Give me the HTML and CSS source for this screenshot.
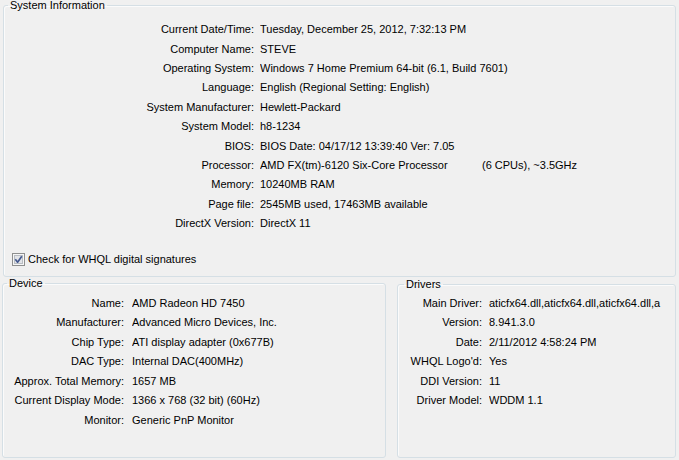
FILE: index.html
```html
<!DOCTYPE html>
<html>
<head>
<meta charset="utf-8">
<link rel="stylesheet" href="styles.css">
</head>
<body>
<div class="dlg">
  <fieldset class="group sys">
    <legend>System Information</legend>
    <dl class="rows sys-rows">
      <dt>Current Date/Time:</dt><dd>Tuesday, December 25, 2012, 7:32:13 PM</dd>
      <dt>Computer Name:</dt><dd>STEVE</dd>
      <dt>Operating System:</dt><dd>Windows 7 Home Premium 64-bit (6.1, Build 7601)</dd>
      <dt>Language:</dt><dd>English (Regional Setting: English)</dd>
      <dt>System Manufacturer:</dt><dd>Hewlett-Packard</dd>
      <dt>System Model:</dt><dd>h8-1234</dd>
      <dt>BIOS:</dt><dd>BIOS Date: 04/17/12 13:39:40 Ver: 7.05</dd>
      <dt>Processor:</dt><dd><span class="cpu">AMD FX(tm)-6120 Six-Core Processor</span>(6 CPUs), ~3.5GHz</dd>
      <dt>Memory:</dt><dd>10240MB RAM</dd>
      <dt>Page file:</dt><dd>2545MB used, 17463MB available</dd>
      <dt>DirectX Version:</dt><dd>DirectX 11</dd>
    </dl>
    <label class="check">
      <svg class="box" width="13" height="13" viewBox="0 0 13 13">
        <rect x="0.5" y="0.5" width="12" height="12" fill="#f6f6f6" stroke="#8e8f8f"/>
        <rect x="2.5" y="2.5" width="8" height="8" fill="#e2e4e8" stroke="#b9bdc3"/>
        <path d="M3.3 6.3 L5.6 9.2 L9.8 3.2" fill="none" stroke="#44598f" stroke-width="1.7" stroke-linejoin="round"/>
      </svg>
      <span>Check for WHQL digital signatures</span>
    </label>
  </fieldset>
  <div class="lower">
    <fieldset class="group device">
      <legend>Device</legend>
      <dl class="rows dev-rows">
        <dt>Name:</dt><dd>AMD Radeon HD 7450</dd>
        <dt>Manufacturer:</dt><dd>Advanced Micro Devices, Inc.</dd>
        <dt>Chip Type:</dt><dd>ATI display adapter (0x677B)</dd>
        <dt>DAC Type:</dt><dd>Internal DAC(400MHz)</dd>
        <dt>Approx. Total Memory:</dt><dd>1657 MB</dd>
        <dt>Current Display Mode:</dt><dd>1366 x 768 (32 bit) (60Hz)</dd>
        <dt>Monitor:</dt><dd>Generic PnP Monitor</dd>
      </dl>
    </fieldset>
    <fieldset class="group drivers">
      <legend>Drivers</legend>
      <dl class="rows drv-rows">
        <dt>Main Driver:</dt><dd>aticfx64.dll,aticfx64.dll,aticfx64.dll,a</dd>
        <dt>Version:</dt><dd>8.941.3.0</dd>
        <dt>Date:</dt><dd>2/11/2012 4:58:24 PM</dd>
        <dt>WHQL Logo'd:</dt><dd>Yes</dd>
        <dt>DDI Version:</dt><dd>11</dd>
        <dt>Driver Model:</dt><dd>WDDM 1.1</dd>
      </dl>
    </fieldset>
  </div>
</div>
</body>
</html>
```
FILE: styles.css
```css
html, body {
  margin: 0;
  padding: 0;
}
body {
  background: #f0f0f0;
  color: #000;
  font: 11px/13px "Liberation Sans", Arial, sans-serif;
  width: 679px;
  height: 460px;
  overflow: hidden;
}
.dlg {
  margin-top: -1px;
}
.group {
  margin: 0;
  padding: 0;
  min-width: 0;
  border: 1px solid #d5dfe5;
  border-radius: 3px;
  box-shadow: inset 1px 1px 0 #fbfbfb;
}
.group legend {
  margin-left: 4px;
  padding: 0 2px;
  line-height: 12px;
}
.sys {
  margin-left: 3px;
  width: 673px;
  box-sizing: border-box;
  padding-bottom: 10px;
}
.rows {
  margin: 0;
  display: grid;
  grid-auto-rows: 19.4px;
  align-items: center;
  white-space: nowrap;
}
.rows dt {
  text-align: right;
}
.rows dd {
  margin: 0;
  overflow: hidden;
}
.sys-rows {
  margin-top: 9px;
  grid-template-columns: 250px 1fr;
  column-gap: 6px;
}
.cpu {
  display: inline-block;
  width: 222px;
}
.check {
  display: flex;
  align-items: center;
  gap: 3px;
  margin: 20px 0 0 8px;
  height: 13px;
}
.box {
  display: block;
  flex: none;
}
.lower {
  display: flex;
  align-items: stretch;
  height: 181px;
  margin-top: 0;
}
.device {
  margin-left: 2px;
  width: 384px;
  box-sizing: border-box;
}
.dev-rows {
  margin-top: 4px;
  grid-auto-rows: 19.5px;
  grid-template-columns: 121px 1fr;
  column-gap: 8px;
}
.drivers {
  margin-left: 11px;
  margin-top: 1px;
  width: 279px;
  box-sizing: border-box;
}
.drivers legend {
  margin-left: 6px;
}
.drv-rows {
  margin-top: 3px;
  grid-auto-rows: 19.5px;
  grid-template-columns: 84px 1fr;
  column-gap: 7px;
}
```
